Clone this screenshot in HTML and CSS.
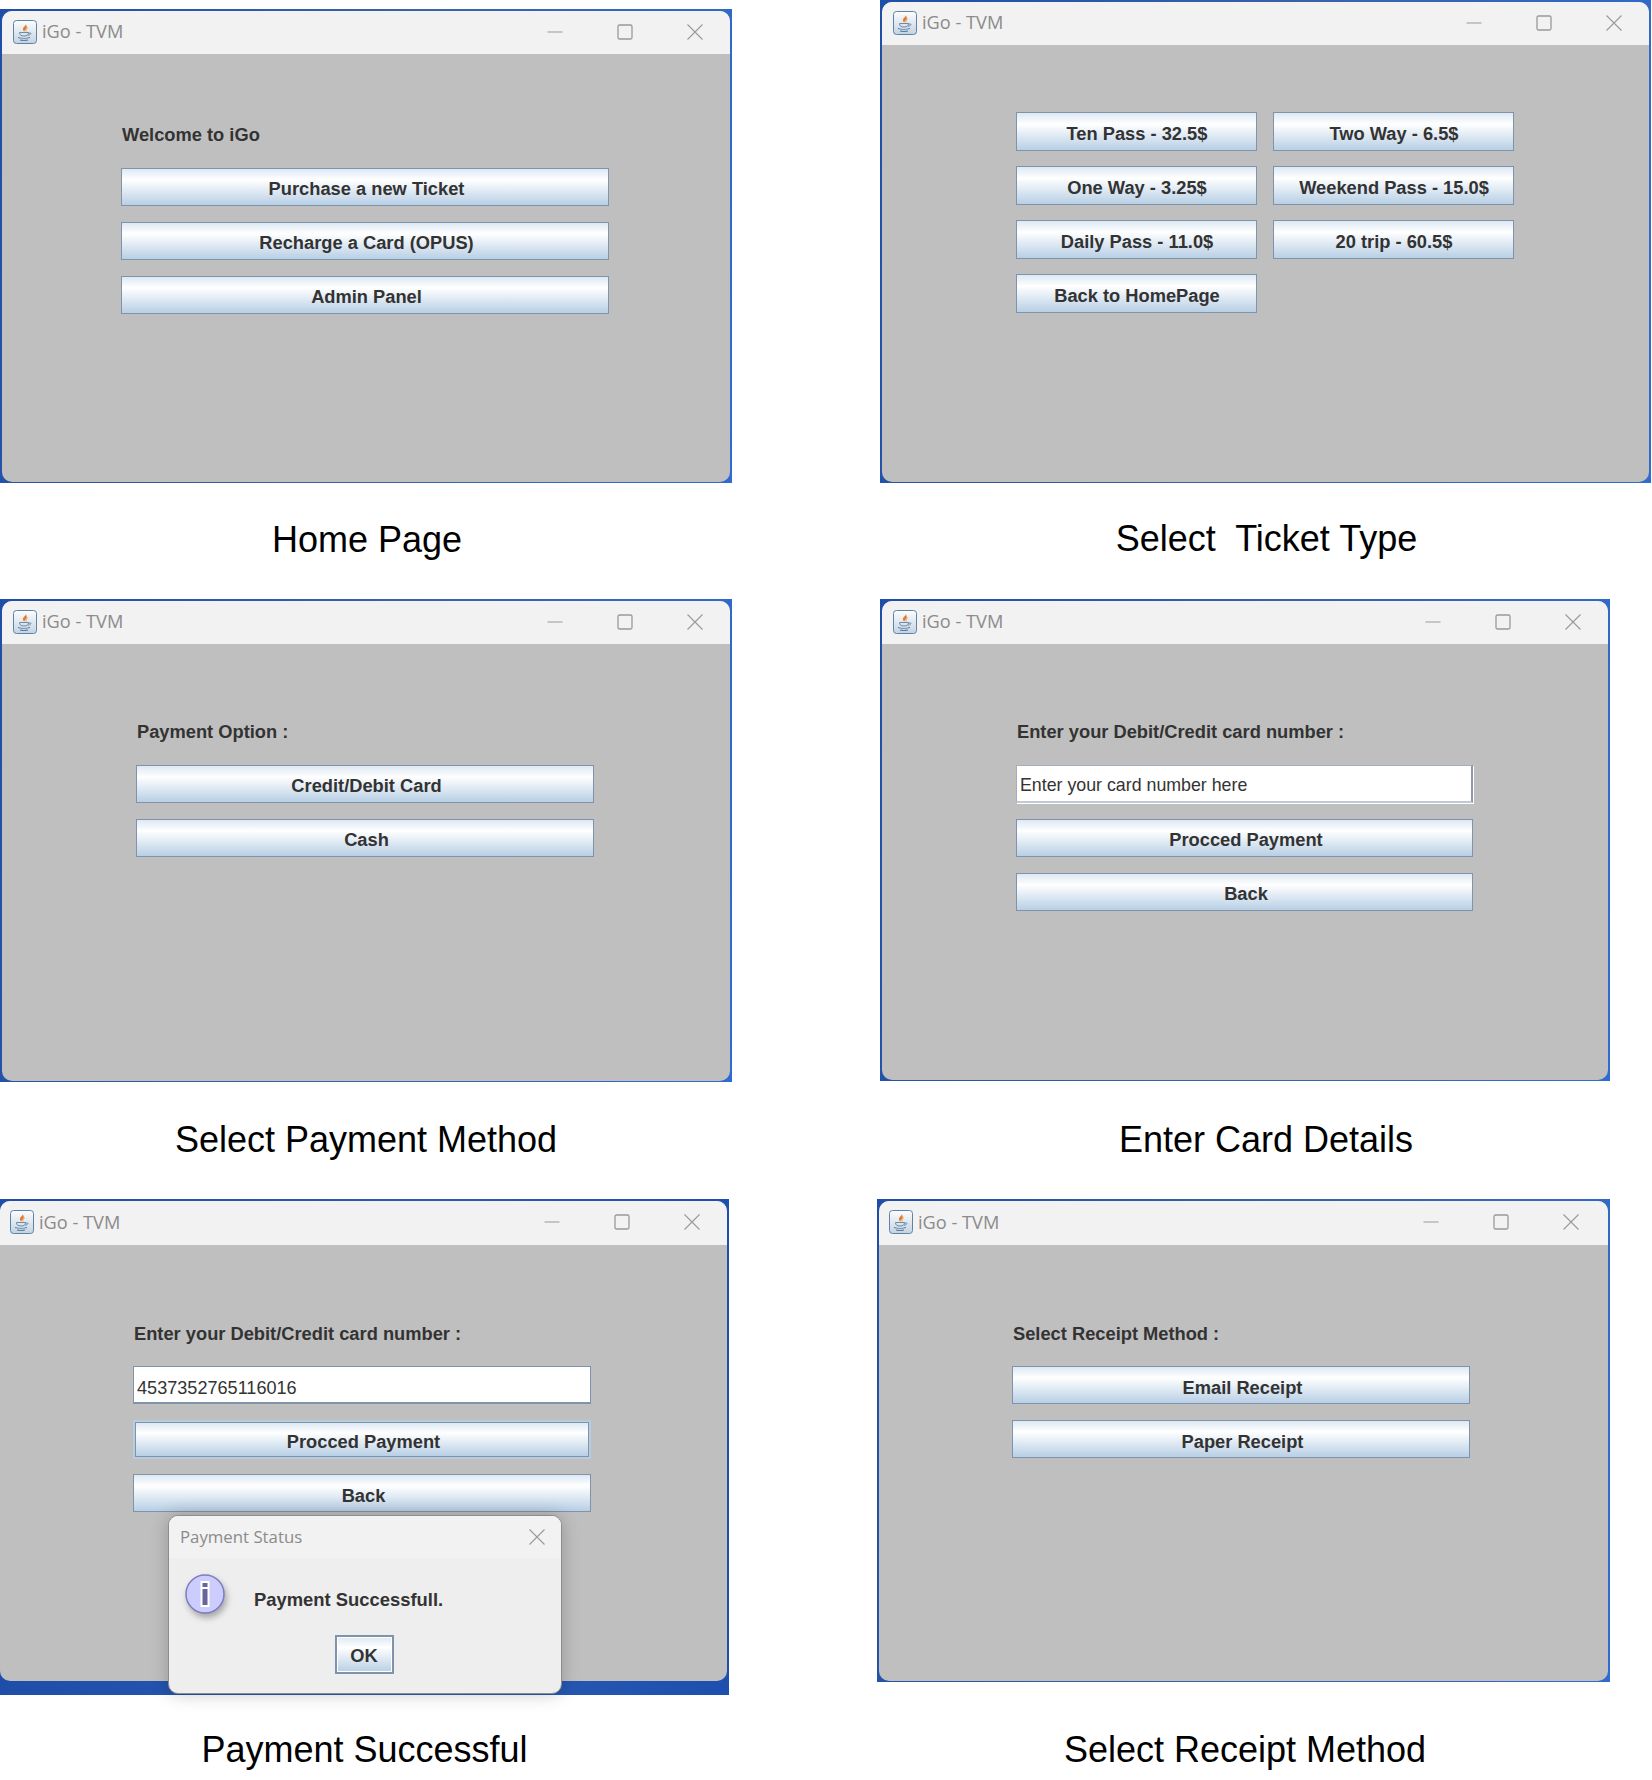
FILE: index.html
```html
<!DOCTYPE html>
<html lang="en">
<head>
<meta charset="utf-8">
<title>iGo - TVM screens</title>
<link rel="stylesheet" href="styles.css">
</head>
<body>
<svg class="defs" width="0" height="0" aria-hidden="true">
  <defs>
    <linearGradient id="iconbg" x1="0" y1="0" x2="0" y2="1">
      <stop offset="0" stop-color="#fdfdfe"/>
      <stop offset="1" stop-color="#c3d3e2"/>
    </linearGradient>
    <symbol id="java" viewBox="0 0 24 24">
      <rect x="0.5" y="0.5" width="23" height="23" rx="3" fill="url(#iconbg)" stroke="#5f83a6"/>
      <path d="M12.5 3.5c1.5 2-3 3.500-2.500 6 .2 1 .8 1.500 1.300 2.200-.2-1.700 3.200-2.700 2.400-5.200-.2-1-.7-2-1.200-3z" fill="#e8782a"/>
      <path d="M14.500 7.500c-.5 1.500-2 2.300-1.500 4" fill="none" stroke="#f0a060"/>
      <path d="M6.500 12.500h9c0 2.500-1.500 3.500-4.500 3.500s-4.500-1-4.500-3.500zM15.500 13h2c.8 0 .8 1.800-2.500 2.300" fill="none" stroke="#6f8ba6"/>
      <path d="M5 17.500c3 1 9 1 12 0M7 20c2 .5 6 .5 8 0" fill="none" stroke="#5f7f9f" stroke-width="1.200"/>
    </symbol>
    <symbol id="min" viewBox="0 0 16 16"><path d="M0.500 8h15" stroke="#999" stroke-width="1" fill="none"/></symbol>
    <symbol id="max" viewBox="0 0 16 16"><rect x="1" y="1" width="14" height="14" rx="1.500" stroke="#999" stroke-width="1.300" fill="none"/></symbol>
    <symbol id="close" viewBox="0 0 16 16"><path d="M0.500 0.500l15 15M15.500 0.500l-15 15" stroke="#999" stroke-width="1.100" fill="none"/></symbol>
    <symbol id="info" viewBox="0 0 40 40">
      <circle cx="20" cy="20" r="19" fill="#ccccff" stroke="#7d7dc0" stroke-width="1.500"/>
      <rect x="15.500" y="7" width="9" height="26" fill="#ffffff"/>
      <rect x="17.500" y="9" width="5" height="4" fill="#66669a"/>
      <rect x="17.500" y="15" width="5" height="16" fill="#66669a"/>
    </symbol>
  </defs>
</svg>

<main class="board">

  <section class="shot shot-home">
    <div class="win win-home">
      <div class="win-in">
        <header class="bar">
          <svg class="app-icon"><use href="#java"/></svg><span class="bar-title">iGo - TVM</span>
          <span class="controls">
            <svg class="ctl"><use href="#min"/></svg><svg class="ctl"><use href="#max"/></svg><svg class="ctl"><use href="#close"/></svg>
          </span>
        </header>
        <div class="body body-home">
          <div class="stack stack-home">
            <div class="label">Welcome to iGo</div>
            <div class="btn">Purchase a new Ticket</div>
            <div class="btn">Recharge a Card (OPUS)</div>
            <div class="btn">Admin Panel</div>
          </div>
        </div>
      </div>
    </div>
    <h2 class="caption cap-home">Home Page</h2>
  </section>

  <section class="shot shot-ticket">
    <div class="win win-ticket">
      <div class="win-in">
        <header class="bar">
          <svg class="app-icon"><use href="#java"/></svg><span class="bar-title">iGo - TVM</span>
          <span class="controls">
            <svg class="ctl"><use href="#min"/></svg><svg class="ctl"><use href="#max"/></svg><svg class="ctl"><use href="#close"/></svg>
          </span>
        </header>
        <div class="body body-ticket">
          <div class="ticket-grid">
            <div class="btn">Ten Pass - 32.5$</div>
            <div class="btn">Two Way - 6.5$</div>
            <div class="btn">One Way - 3.25$</div>
            <div class="btn">Weekend Pass - 15.0$</div>
            <div class="btn">Daily Pass - 11.0$</div>
            <div class="btn">20 trip - 60.5$</div>
            <div class="btn">Back to HomePage</div>
          </div>
        </div>
      </div>
    </div>
    <h2 class="caption cap-ticket">Select&nbsp; Ticket Type</h2>
  </section>

  <section class="shot shot-pay">
    <div class="win win-pay">
      <div class="win-in">
        <header class="bar">
          <svg class="app-icon"><use href="#java"/></svg><span class="bar-title">iGo - TVM</span>
          <span class="controls">
            <svg class="ctl"><use href="#min"/></svg><svg class="ctl"><use href="#max"/></svg><svg class="ctl"><use href="#close"/></svg>
          </span>
        </header>
        <div class="body body-pay">
          <div class="stack stack-pay">
            <div class="label">Payment Option :</div>
            <div class="btn">Credit/Debit Card</div>
            <div class="btn">Cash</div>
          </div>
        </div>
      </div>
    </div>
    <h2 class="caption cap-pay">Select Payment Method</h2>
  </section>

  <section class="shot shot-card">
    <div class="win win-card">
      <div class="win-in">
        <header class="bar">
          <svg class="app-icon"><use href="#java"/></svg><span class="bar-title">iGo - TVM</span>
          <span class="controls">
            <svg class="ctl"><use href="#min"/></svg><svg class="ctl"><use href="#max"/></svg><svg class="ctl"><use href="#close"/></svg>
          </span>
        </header>
        <div class="body body-card">
          <div class="stack stack-card">
            <div class="label">Enter your Debit/Credit card number :</div>
            <div class="field">Enter your card number here</div>
            <div class="btn">Procced Payment</div>
            <div class="btn">Back</div>
          </div>
        </div>
      </div>
    </div>
    <h2 class="caption cap-card">Enter Card Details</h2>
  </section>

  <section class="shot shot-ok">
    <div class="win win-ok">
      <div class="win-in">
        <header class="bar">
          <svg class="app-icon"><use href="#java"/></svg><span class="bar-title">iGo - TVM</span>
          <span class="controls">
            <svg class="ctl"><use href="#min"/></svg><svg class="ctl"><use href="#max"/></svg><svg class="ctl"><use href="#close"/></svg>
          </span>
        </header>
        <div class="body body-ok">
          <div class="stack stack-ok">
            <div class="label">Enter your Debit/Credit card number :</div>
            <div class="field field-filled">4537352765116016</div>
            <div class="btn btn-focus">Procced Payment</div>
            <div class="btn">Back</div>
          </div>
        </div>
      </div>
      <div class="dialog">
        <header class="dlg-bar">
          <span class="dlg-title">Payment Status</span>
          <svg class="ctl"><use href="#close"/></svg>
        </header>
        <div class="dlg-body">
          <div class="dlg-msg">
            <svg class="info"><use href="#info"/></svg>
            <span class="dlg-text">Payment Successfull.</span>
          </div>
          <div class="btn btn-ok">OK</div>
        </div>
      </div>
    </div>
    <h2 class="caption cap-ok">Payment Successful</h2>
  </section>

  <section class="shot shot-receipt">
    <div class="win win-receipt">
      <div class="win-in">
        <header class="bar">
          <svg class="app-icon"><use href="#java"/></svg><span class="bar-title">iGo - TVM</span>
          <span class="controls">
            <svg class="ctl"><use href="#min"/></svg><svg class="ctl"><use href="#max"/></svg><svg class="ctl"><use href="#close"/></svg>
          </span>
        </header>
        <div class="body body-receipt">
          <div class="stack stack-receipt">
            <div class="label">Select Receipt Method :</div>
            <div class="btn">Email Receipt</div>
            <div class="btn">Paper Receipt</div>
          </div>
        </div>
      </div>
    </div>
    <h2 class="caption cap-receipt">Select Receipt Method</h2>
  </section>

</main>
</body>
</html>
```

FILE: styles.css
```css
* { box-sizing: border-box; }

html, body { margin: 0; padding: 0; background: #fff; }

.defs { position: absolute; }

.board {
  width: 1652px;
  height: 1780px;
  display: grid;
  grid-template-columns: 877px 775px;
  grid-template-rows: 599px 600px 581px;
}

.shot { display: flex; flex-direction: column; align-items: flex-start; }

.win {
  position: relative;
  padding: 2px 2px 1px 2px;
  background: linear-gradient(100deg, #1f4ea8 0%, #3a62a8 50%, #2f6bd0 100%);
}

.win-in {
  display: flex;
  flex-direction: column;
  height: 100%;
  border-radius: 10px;
  overflow: hidden;
  background: #bfbfbf;
}

.win-home   { width: 732px; height: 474px; margin-top: 9px; }
.win-ticket { width: 771px; height: 483px; margin-left: 3px; }
.win-pay    { width: 732px; height: 483px; }
.win-card   { width: 730px; height: 482px; margin-left: 3px; }
.win-ok     { width: 729px; height: 496px; padding: 2px 2px 14px 0; background: linear-gradient(90deg, #1f4ea8, #2a5cb4 60%, #1d4fae); }
.win-receipt{ width: 733px; height: 483px; }

.bar {
  flex: none;
  height: 43px;
  display: flex;
  align-items: center;
  padding: 0 0 2px 11px;
  background: #f2f2f2;
}

.win-ok .bar,
.win-receipt .bar { height: 44px; }

.win-ok .bar { padding-left: 10px; }
.win-receipt .bar { padding-left: 10px; }

.app-icon { width: 24px; height: 24px; flex: none; }

.bar-title {
  margin-left: 5px;
  font: 18.2px/1 "Open Sans", "Noto Sans", sans-serif;
  color: #8b8b8b;
}

.controls {
  margin-left: auto;
  display: flex;
  align-items: center;
  gap: 54px;
  padding-right: 27px;
}

.win-receipt .controls { padding-right: 29px; }

.ctl { width: 16px; height: 16px; flex: none; }

.body { flex: 1; }

.stack {
  display: flex;
  flex-direction: column;
  gap: 16px;
  padding-top: 67px;
}

.stack-home    { margin-left: 119px; width: 488px; padding-top: 60px; }
.stack-pay     { margin-left: 134px; width: 458px; }
.stack-card    { margin-left: 134px; width: 457px; }
.stack-ok      { margin-left: 133px; width: 458px; }
.stack-receipt { margin-left: 133px; width: 458px; }

.label,
.btn {
  font: bold 18.3px/1 "Liberation Sans", Arial, sans-serif;
  color: #333;
}

.label {
  height: 38px;
  display: flex;
  align-items: center;
  padding: 4px 0 0 1px;
}

.stack-ok .label,
.stack-receipt .label { padding-top: 7px; }

.btn {
  height: 38px;
  display: flex;
  align-items: center;
  justify-content: center;
  padding: 5px 0 0 3px;
  border: 1px solid #7f93ab;
  background: linear-gradient(180deg, #dde8f3 0%, #ffffff 30%, #b8cfe5 100%);
}

.stack-home .btn { padding-top: 4px; }

.stack-ok .btn,
.stack-receipt .btn { padding-top: 6px; }

.stack-ok .btn-focus {
  height: 35px;
  margin: 2px 2px 1px;
  padding-top: 5px;
  box-shadow: 0 0 0 2px #b8cce0;
}

.ticket-grid {
  display: grid;
  grid-template-columns: 241px 241px;
  gap: 15px 16px;
  margin-left: 134px;
  padding-top: 67px;
}

.ticket-grid .btn { height: 39px; padding-left: 1px; }

.field {
  height: 38px;
  display: flex;
  align-items: center;
  padding: 5px 0 0 3px;
  background: #fff;
  border-top: 1px solid #a3adbb;
  border-left: 1px solid #a3adbb;
  border-right: 2px solid #8e98a8;
  border-bottom: 2px solid #c3c9d2;
  box-shadow: 1px 1px 0 #fff;
  font: 17.8px/1 "Liberation Sans", Arial, sans-serif;
  color: #333;
}

.field-filled {
  padding-top: 7px;
  border: 1px solid #7f93ab;
  border-bottom-width: 2px;
  box-shadow: none;
  font-size: 18.1px;
}

.caption {
  margin: 0;
  font: 400 36px/1 "Liberation Sans", Arial, sans-serif;
  color: #000;
  text-align: center;
}

.cap-home    { width: 734px; margin-top: 39px; }
.cap-ticket  { width: 773px; margin-top: 38px; margin-left: 3px; }
.cap-pay     { width: 732px; margin-top: 40px; }
.cap-card    { width: 772px; margin-top: 41px; margin-left: 3px; }
.cap-ok      { width: 729px; margin-top: 37px; }
.cap-receipt { width: 736px; margin-top: 50px; }

.dialog {
  position: absolute;
  left: 168px;
  top: 316px;
  width: 394px;
  height: 179px;
  border-radius: 10px;
  overflow: hidden;
  background: #eeeeee;
  border: 1px solid #8d8d8d;
  box-shadow: 0 0 18px rgba(0, 0, 0, .22);
  display: flex;
  flex-direction: column;
}

.dlg-bar {
  flex: none;
  height: 42px;
  display: flex;
  align-items: center;
  justify-content: space-between;
  padding: 0 16px 0 11px;
  background: #f2f2f2;
}

.dlg-title {
  font: 16.8px/1 "Open Sans", "Noto Sans", sans-serif;
  color: #8b8b8b;
}

.dlg-body {
  flex: 1;
  display: flex;
  flex-direction: column;
  align-items: center;
}

.dlg-msg {
  align-self: stretch;
  display: flex;
  align-items: flex-start;
  padding: 16px 0 0 16px;
  height: 77px;
}

.info {
  width: 40px;
  height: 40px;
  flex: none;
  filter: drop-shadow(2px 4px 3px rgba(0, 0, 0, .3));
}

.dlg-text {
  margin: 17px 0 0 29px;
  font: bold 18.4px/1 "Liberation Sans", Arial, sans-serif;
  color: #333;
}

.btn-ok {
  width: 59px;
  height: 39px;
  margin-right: 2px;
  padding: 4px 0 0;
  border: 2px solid #7f93ab;
  box-shadow: inset 0 0 0 1px #fff;
}
```
